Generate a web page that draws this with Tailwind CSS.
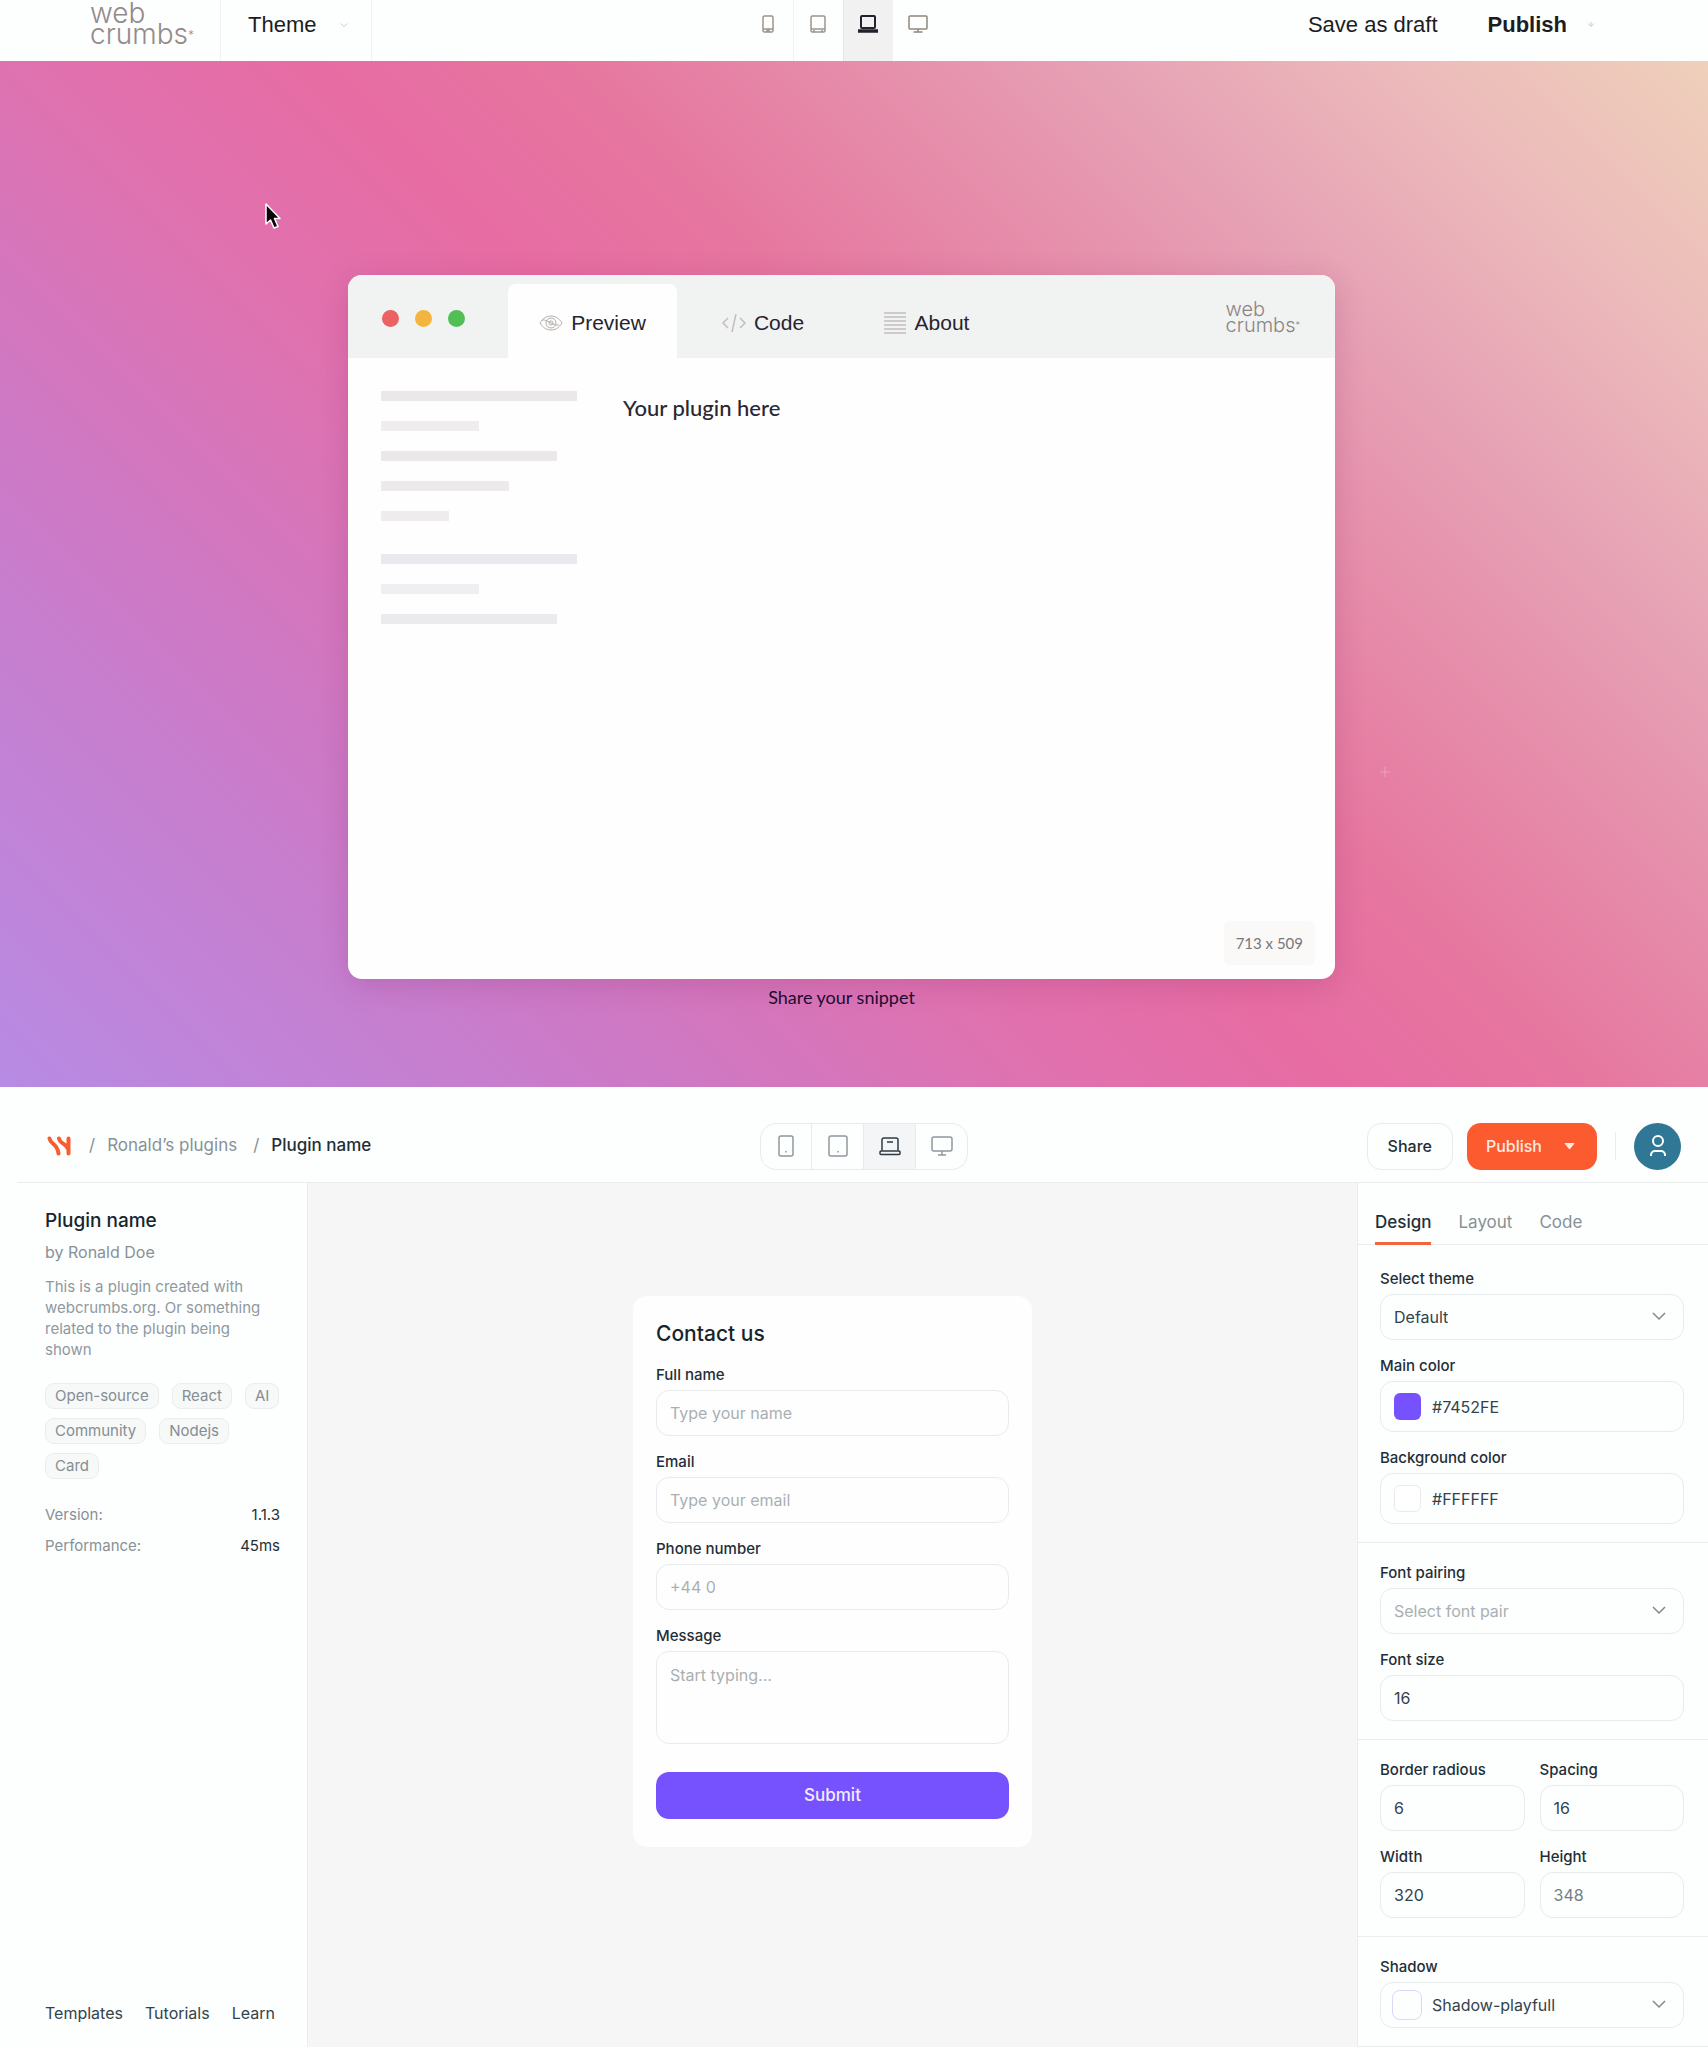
<!doctype html>
<html lang="en">
  <head>
    <meta charset="UTF-8" />
    <meta name="viewport" content="width=device-width, initial-scale=1.0" />
    <script src="https://cdn.jsdelivr.net/npm/@tailwindcss/browser@4"></script>
    <title>Webcrumbs</title>
  </head>
  <body class="bg-[#fdfefe] font-['Inter',sans-serif] text-[#1f2f38]">
    <!-- Theme bar -->
    <header class="grid h-[61px] grid-cols-3 items-stretch bg-[#fdfefe] pl-[90px] font-['Liberation_Sans',sans-serif] text-[22px] text-[#1c1c22]">
      <div class="flex items-stretch">
        <a href="#" class="w-[130px] pt-[3px] font-['Inter',sans-serif] text-[28px] leading-[21px] font-light text-[#958a8a]">web<br />crumbs<span class="align-top text-[12px]">*</span></a>
        <button class="flex w-[152px] items-center gap-6 border-x border-[#f3f3f3] pb-3 pl-[27px]">
          Theme
          <svg class="size-2 text-[#cfc8c4]" viewBox="0 0 8 8" fill="none" stroke="currentColor"><path d="m1 2.5 3 3 3-3" /></svg>
        </button>
      </div>
      <nav class="flex justify-center pr-[112px]" aria-label="Preview size">
        <button aria-label="Phone" class="flex w-[50px] justify-center pt-[14px] text-[#9a958e]">
          <svg class="size-5" viewBox="0 0 20 20" fill="none" stroke="currentColor" stroke-width="1.5"><rect x="5" y="2" width="10" height="16" rx="1.5" /><path d="M5 15h10M9 18v-2h2v2" /></svg>
        </button>
        <button aria-label="Tablet" class="flex w-[50px] justify-center border-l border-[#f1f1f1] pt-[14px] text-[#9a958e]">
          <svg class="size-5" viewBox="0 0 20 20" fill="none" stroke="currentColor" stroke-width="1.5"><rect x="3" y="2" width="14" height="16" rx="1.5" /><path d="M3 15h14M6 18v-2M14 18v-2" /></svg>
        </button>
        <button aria-label="Laptop" class="flex w-[50px] justify-center border-l border-[#e6e6e6] bg-[#f1f1f2] pt-[14px] text-[#24202c]">
          <svg class="size-5" viewBox="0 0 20 20" fill="none" stroke="currentColor" stroke-width="2"><rect x="3" y="2" width="14" height="12" rx="1" /><path stroke-width="3.5" d="M0 17h20" /></svg>
        </button>
        <button aria-label="Desktop" class="flex w-[50px] justify-center pt-[14px] text-[#8f877e]">
          <svg class="size-5" viewBox="0 0 20 20" fill="none" stroke="currentColor" stroke-width="1.5"><rect x="1" y="2" width="18" height="13" rx="1" /><path d="M10 15v3M5.500 18h9" /></svg>
        </button>
      </nav>
      <div class="flex items-center justify-end gap-[50px] pr-[113px] pb-3">
        <button>Save as draft</button>
        <button class="flex items-center gap-5 font-bold">
          Publish
          <svg class="size-2 text-[#cfc8c4]" viewBox="0 0 8 8" fill="none" stroke="currentColor"><path d="m1 2.500 3 3 3-3M4 1v4" /></svg>
        </button>
      </div>
    </header>

    <!-- Snippet preview -->
    <section class="relative flex flex-col items-center bg-[linear-gradient(45deg,#b78be4_0%,#cd79c6_24%,#df72b0_38%,#e76ca3_49%,#e6769f_58%,#e6a0b4_77%,#ecb9bb_88%,#efd0ba_100%)] pt-[214px] pb-[77px]">
      <svg class="absolute top-[142px] left-[264px] h-[27px] w-[18px]" viewBox="0 0 18 27">
        <path d="M2 1v20l4.500-4 3.500 8 4-1.500-3.500-8H16z" fill="#0c0509" stroke="#fff" stroke-width="1.500" stroke-linejoin="round" />
      </svg>
      <svg class="absolute top-[705px] left-[1379px] size-3" viewBox="0 0 12 12" fill="none" stroke="#f0a0bd"><path d="M6 1v10M1 6h10" /></svg>
      <div class="mr-[25px] flex h-[704px] w-[987px] flex-col overflow-hidden rounded-[14px] bg-[#fefefe] shadow-[0_6px_30px_rgba(120,30,90,0.2)]">
        <div class="flex h-[83px] bg-[#f1f2f2] pt-[9px] pr-[35px] pl-[34px] font-['Liberation_Sans',sans-serif] text-[21px] text-[#26242e]">
          <div class="flex w-[126px] gap-4 pt-[26px]">
            <span class="size-[17px] rounded-full bg-[#ec6262]"></span>
            <span class="size-[17px] rounded-full bg-[#f2b640]"></span>
            <span class="size-[17px] rounded-full bg-[#51bf54]"></span>
          </div>
          <button class="flex w-[169px] items-center justify-center gap-2 rounded-t-lg bg-[#fefefe] pt-1">
            <svg class="size-6 text-[#b5aeaa]" viewBox="0 0 24 24" fill="none" stroke="currentColor"><path d="M1 12c3-5 7-7 11-7s8 2 11 7c-3 5-7 7-11 7S4 17 1 12Z" /><circle cx="12" cy="12" r="5" /><circle cx="12" cy="12" r="2" /><path d="M3 9c6-1 10 6 17 5" /></svg>
            Preview
          </button>
          <button class="flex w-[172px] items-center justify-center gap-2 pt-1">
            <svg class="size-6 text-[#c3bebb]" viewBox="0 0 24 24" fill="none" stroke="currentColor" stroke-width="1.500"><path d="m6 7-5 5 5 5M18 7l5 5-5 5M14 3l-4 18" /></svg>
            Code
          </button>
          <button class="flex w-[154px] items-center justify-center gap-2 pt-1">
            <svg class="size-6 text-[#c3bfbd]" viewBox="0 0 24 24" fill="none" stroke="currentColor" stroke-width="1.500"><path d="M1 2h22M1 6h22M1 10h22M1 14h22M1 18h22M1 22h22" /></svg>
            About
          </button>
          <a href="#" class="mt-[17px] ml-auto font-['Inter',sans-serif] text-[20px] leading-[16px] font-light text-[#8d8484]">web<br />crumbs<span class="align-top text-[9px]">*</span></a>
        </div>
        <div class="flex flex-1 gap-[46px] px-[33px] pt-[33px]">
          <div class="flex w-[196px] flex-col gap-5">
            <span class="h-[10px] w-full bg-[#ebe8ea]"></span>
            <span class="h-[10px] w-1/2 bg-[#f0edef]"></span>
            <span class="h-[10px] w-9/10 bg-[#ebe8ea]"></span>
            <span class="h-[10px] w-[128px] bg-[#edeaeb]"></span>
            <span class="h-[10px] w-[68px] bg-[#efecee]"></span>
            <span class="mt-[13px] h-[10px] w-full bg-[#ebe9ed]"></span>
            <span class="h-[10px] w-1/2 bg-[#efeef1]"></span>
            <span class="h-[10px] w-9/10 bg-[#ebeaec]"></span>
          </div>
          <p class="font-['Lato',sans-serif] text-[22px] font-medium text-[#2a2730]">Your plugin here</p>
        </div>
        <p class="mr-5 mb-[14px] self-end rounded-md bg-[#faf9f8] px-3 py-[10px] font-['Lato',sans-serif] text-[15px] leading-[24px] text-[#7b7678]">713 x 509</p>
      </div>
      <a href="#" class="mt-[5px] mr-[25px] font-['Lato',sans-serif] text-[18px] leading-[26px] text-[#1d0b33]">Share your snippet</a>
    </section>

    <!-- Plugin editor -->
    <div class="pl-[17px]">
      <header class="flex h-[96px] items-center justify-between border-b border-[#ebeded] pt-9 pr-[27px] pb-[13px] pl-[30px]">
        <nav class="flex flex-1 items-center gap-3 text-[17px] text-[#879196]" aria-label="Breadcrumb">
          <a href="#" aria-label="Webcrumbs" class="mr-[6px]">
            <svg class="h-5 w-6" viewBox="0 0 24 20" fill="none" stroke="#fa5c30" stroke-width="4" stroke-linecap="round"><path d="M2.500 2.500c1 6 8 5 9 15M12 2.500c1 6 7 4 9.500 11M21.500 2.500v15" /></svg>
          </a>
          <span>/</span>
          <a href="#" class="mr-1">Ronald’s plugins</a>
          <span>/</span>
          <span class="font-medium text-[#1f2f38]">Plugin name</span>
        </nav>
        <div class="flex h-[47px] divide-x divide-[#e8ebec] overflow-hidden rounded-2xl border border-[#e8ebec] text-[#8f989e]">
          <button aria-label="Phone" class="flex w-[51px] items-center justify-center">
            <svg class="size-6" viewBox="0 0 24 24" fill="none" stroke="currentColor" stroke-width="1.500"><rect x="5" y="2" width="14" height="20" rx="2" /><path d="M12 17v1.500" /></svg>
          </button>
          <button aria-label="Tablet" class="flex w-[52px] items-center justify-center">
            <svg class="size-6" viewBox="0 0 24 24" fill="none" stroke="currentColor" stroke-width="1.500"><rect x="3" y="2" width="18" height="20" rx="2" /><path d="M12 17v1.500" /></svg>
          </button>
          <button aria-label="Laptop" class="flex w-[52px] items-center justify-center bg-[#f3f5f7] text-[#2f3b44]">
            <svg class="size-6" viewBox="0 0 24 24" fill="none" stroke="currentColor" stroke-width="1.500"><path d="M4 16.500V6a2 2 0 0 1 2-2h12a2 2 0 0 1 2 2v10.500M9 8h6" /><rect x="2" y="17" width="20" height="3.500" rx="1" /></svg>
          </button>
          <button aria-label="Desktop" class="flex w-[51px] items-center justify-center">
            <svg class="size-6" viewBox="0 0 24 24" fill="none" stroke="currentColor" stroke-width="1.500"><rect x="2" y="3" width="20" height="14" rx="2" /><path d="M12 17v4M8 21h8" /></svg>
          </button>
        </div>
        <div class="flex flex-1 items-center justify-end text-[16px] font-medium">
          <button class="h-[47px] rounded-[14px] border border-[#e8ebec] px-5">Share</button>
          <button class="ml-[14px] flex h-[47px] items-center gap-[22px] rounded-[14px] bg-[#fb5b2f] pr-[22px] pl-[19px] text-[#fdeae3]">
            Publish
            <svg class="h-[7px] w-[11px]" viewBox="0 0 11 7" fill="currentColor"><path d="M1 .5h9L5.500 6z" stroke="currentColor" stroke-linejoin="round" /></svg>
          </button>
          <span class="mx-[18px] h-7 w-px bg-[#ebeded]"></span>
          <button aria-label="Account" class="flex size-[47px] items-center justify-center rounded-full bg-[#2f7795] text-white">
            <svg class="size-6" viewBox="0 0 24 24" fill="none" stroke="currentColor" stroke-width="2"><circle cx="12" cy="7" r="5" /><path d="M5 22v-1a4 4 0 0 1 4-4h6a4 4 0 0 1 4 4v1" /></svg>
          </button>
        </div>
      </header>

      <div class="flex">
        <aside class="flex w-[291px] flex-col border-r border-[#ebeded] pt-[23px] pr-[27px] pb-5 pl-7 text-[15px]">
          <h2 class="text-[19px] leading-[30px] font-medium text-[#16252d]">Plugin name</h2>
          <p class="mt-[6px] text-[16px] leading-[20px] text-[#879196]">by Ronald Doe</p>
          <p class="mt-[14px] leading-[21px] text-[#8f999e]">This is a plugin created with webcrumbs.org. Or something related to the plugin being shown</p>
          <ul class="mt-[23px] flex flex-wrap gap-x-[13px] gap-y-[9px] text-[15px] leading-[24px] text-[#848e94]">
            <li class="rounded-[9px] border border-[#ebeded] bg-[#f7f8f8] px-[9px]">Open-source</li>
            <li class="rounded-[9px] border border-[#ebeded] bg-[#f7f8f8] px-[9px]">React</li>
            <li class="rounded-[9px] border border-[#ebeded] bg-[#f7f8f8] px-[9px]">AI</li>
            <li class="rounded-[9px] border border-[#ebeded] bg-[#f7f8f8] px-[9px]">Community</li>
            <li class="rounded-[9px] border border-[#ebeded] bg-[#f7f8f8] px-[9px]">Nodejs</li>
            <li class="rounded-[9px] border border-[#ebeded] bg-[#f7f8f8] px-[9px]">Card</li>
          </ul>
          <dl class="mt-[26px] grid grid-cols-2 gap-y-[11px] leading-[20px]">
            <dt class="text-[#879196]">Version:</dt>
            <dd class="text-right">1.1.3</dd>
            <dt class="text-[#879196]">Performance:</dt>
            <dd class="text-right">45ms</dd>
          </dl>
          <nav class="mt-auto flex gap-[22px] text-[16px] leading-[28px] text-[#33434c]">
            <a href="#">Templates</a>
            <a href="#">Tutorials</a>
            <a href="#">Learn</a>
          </nav>
        </aside>

        <main class="flex flex-1 items-start justify-center bg-[#f6f6f6] pt-[113px]">
          <form class="w-[399px] rounded-[14px] bg-[#fefefe] px-[23px] pt-[22px] pb-7">
            <h1 class="text-[21px] leading-[32px] font-medium text-[#16252d]">Contact us</h1>
            <label for="name" class="mt-[15px] block text-[15px] leading-[20px] font-medium">Full name</label>
            <input id="name" type="text" placeholder="Type your name" class="mt-[5px] block h-[46px] w-full rounded-[13px] border border-[#e8ebec] px-[13px] text-[16px] placeholder:text-[#a9b0b3]" />
            <label for="email" class="mt-4 block text-[15px] leading-[20px] font-medium">Email</label>
            <input id="email" type="email" placeholder="Type your email" class="mt-[5px] block h-[46px] w-full rounded-[13px] border border-[#e8ebec] px-[13px] text-[16px] placeholder:text-[#a9b0b3]" />
            <label for="phone" class="mt-4 block text-[15px] leading-[20px] font-medium">Phone number</label>
            <input id="phone" type="tel" placeholder="+44 0" class="mt-[5px] block h-[46px] w-full rounded-[13px] border border-[#e8ebec] px-[13px] text-[16px] placeholder:text-[#a9b0b3]" />
            <label for="message" class="mt-4 block text-[15px] leading-[20px] font-medium">Message</label>
            <textarea id="message" placeholder="Start typing..." class="mt-[5px] block h-[93px] w-full resize-none rounded-[13px] border border-[#e8ebec] px-[13px] py-[11px] text-[16px] leading-[24px] placeholder:text-[#a9b0b3]"></textarea>
            <button type="submit" class="mt-7 h-[47px] w-full rounded-[13px] bg-[#7652fe] text-[17px] font-medium text-[#f1ecff]">Submit</button>
          </form>
        </main>

        <aside class="w-[351px] border-l border-[#ebeded] text-[16px]">
          <nav class="flex gap-[27px] border-b border-[#ebeded] px-[17px] pt-6 text-[17px] leading-[24px]">
            <button class="-mb-px border-b-3 border-[#f0643e] pt-[3px] pb-2 font-medium">Design</button>
            <button class="pt-[3px] pb-[10px] text-[#879196]">Layout</button>
            <button class="pt-[3px] pb-[10px] text-[#879196]">Code</button>
          </nav>
          <div class="border-b border-[#ebeded] pt-6 pr-6 pb-[18px] pl-[22px]">
            <label for="theme" class="block text-[15px] leading-[20px] font-medium">Select theme</label>
            <div class="relative mt-[5px]">
              <select id="theme" class="h-[46px] w-full appearance-none rounded-[13px] border border-[#e8ebec] px-[13px] text-[#33434c]">
                <option>Default</option>
              </select>
              <svg class="pointer-events-none absolute top-4 right-[18px] h-3 w-[14px]" viewBox="0 0 14 12" fill="none" stroke="#7f8a8f" stroke-width="1.500"><path d="m1 3 6 6 6-6" /></svg>
            </div>
            <label for="main-color" class="mt-4 block text-[15px] leading-[20px] font-medium">Main color</label>
            <div class="mt-[5px] flex h-[51px] items-center gap-[11px] rounded-[13px] border border-[#e8ebec] px-[13px]">
              <span class="size-[27px] rounded-md bg-[#7652fe]"></span>
              <input id="main-color" type="text" value="#7452FE" class="min-w-0 flex-1 text-[#33434c]" />
            </div>
            <label for="bg-color" class="mt-4 block text-[15px] leading-[20px] font-medium">Background color</label>
            <div class="mt-[5px] flex h-[51px] items-center gap-[11px] rounded-[13px] border border-[#e8ebec] px-[13px]">
              <span class="size-[27px] rounded-md border border-[#e8ebec] bg-white"></span>
              <input id="bg-color" type="text" value="#FFFFFF" class="min-w-0 flex-1 text-[#33434c]" />
            </div>
          </div>
          <div class="border-b border-[#ebeded] pt-5 pr-6 pb-[18px] pl-[22px]">
            <label for="font-pair" class="block text-[15px] leading-[20px] font-medium">Font pairing</label>
            <div class="relative mt-[5px]">
              <select id="font-pair" class="h-[46px] w-full appearance-none rounded-[13px] border border-[#e8ebec] px-[13px] text-[#a9b0b3]">
                <option>Select font pair</option>
              </select>
              <svg class="pointer-events-none absolute top-4 right-[18px] h-3 w-[14px]" viewBox="0 0 14 12" fill="none" stroke="#7f8a8f" stroke-width="1.500"><path d="m1 3 6 6 6-6" /></svg>
            </div>
            <label for="font-size" class="mt-4 block text-[15px] leading-[20px] font-medium">Font size</label>
            <input id="font-size" type="text" value="16" class="mt-[5px] block h-[46px] w-full rounded-[13px] border border-[#e8ebec] px-[13px] text-[#33434c]" />
          </div>
          <div class="grid grid-cols-2 gap-x-[15px] gap-y-4 border-b border-[#ebeded] pt-5 pr-6 pb-[18px] pl-[22px]">
            <div>
              <label for="radius" class="block text-[15px] leading-[20px] font-medium">Border radious</label>
              <input id="radius" type="text" value="6" class="mt-[5px] block h-[46px] w-full rounded-[13px] border border-[#e8ebec] px-[13px] text-[#33434c]" />
            </div>
            <div>
              <label for="spacing" class="block text-[15px] leading-[20px] font-medium">Spacing</label>
              <input id="spacing" type="text" value="16" class="mt-[5px] block h-[46px] w-full rounded-[13px] border border-[#e8ebec] px-[13px] text-[#33434c]" />
            </div>
            <div>
              <label for="width" class="block text-[15px] leading-[20px] font-medium">Width</label>
              <input id="width" type="text" value="320" class="mt-[5px] block h-[46px] w-full rounded-[13px] border border-[#e8ebec] px-[13px] text-[#33434c]" />
            </div>
            <div>
              <label for="height" class="block text-[15px] leading-[20px] font-medium">Height</label>
              <input id="height" type="text" value="348" class="mt-[5px] block h-[46px] w-full rounded-[13px] border border-[#e8ebec] px-[13px] text-[#747f85]" />
            </div>
          </div>
          <div class="border-b border-[#ebeded] pt-5 pr-6 pb-[18px] pl-[22px]">
            <label for="shadow" class="block text-[15px] leading-[20px] font-medium">Shadow</label>
            <div class="relative mt-[5px]">
              <select id="shadow" class="h-[46px] w-full appearance-none rounded-[13px] border border-[#e8ebec] pl-[51px] text-[#33434c]">
                <option>Shadow-playfull</option>
              </select>
              <span class="pointer-events-none absolute top-2 left-3 size-[30px] rounded-lg border border-[#dcd6fb]"></span>
              <svg class="pointer-events-none absolute top-4 right-[18px] h-3 w-[14px]" viewBox="0 0 14 12" fill="none" stroke="#7f8a8f" stroke-width="1.500"><path d="m1 3 6 6 6-6" /></svg>
            </div>
          </div>
        </aside>
      </div>
    </div>
  </body>
</html>
